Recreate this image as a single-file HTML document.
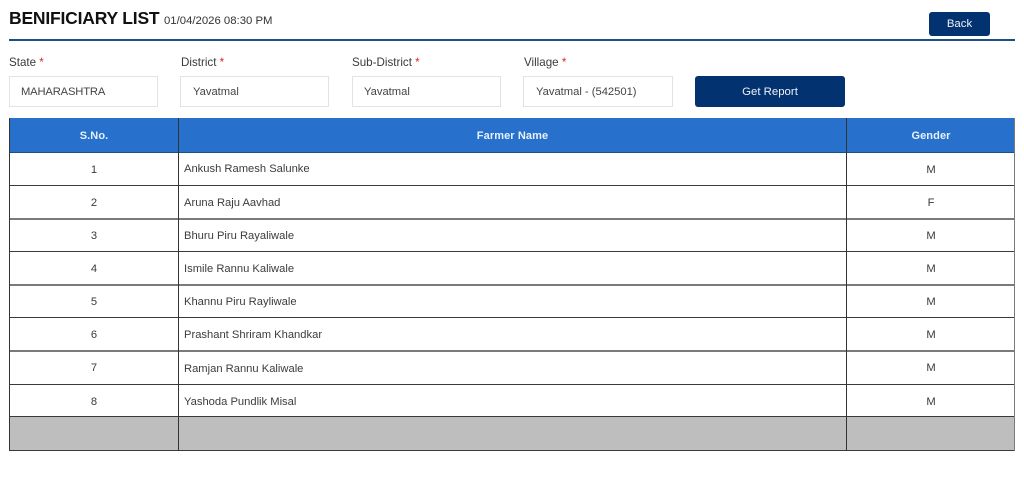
<!DOCTYPE html>
<html>
<head>
<meta charset="utf-8">
<style>
html,body{margin:0;padding:0;background:#fff;}
body{width:1024px;height:486px;position:relative;overflow:hidden;font-family:"Liberation Sans",sans-serif;color:#333;}
.a{position:absolute;white-space:nowrap;}
.lab{top:56px;font-size:11.6px;line-height:14px;color:#3a3a3a;}
.lab i{font-style:normal;color:#d9262c;}
.inp{top:76px;height:29px;width:147px;border:1px solid #e3e3e3;background:#fff;font-size:11.2px;line-height:31px;color:#444;box-sizing:content-box;}
.btn{background:#033270;color:#eef2f8;text-align:center;border-radius:3px;font-size:11.4px;}
.h{background:#3a3a3a;height:1px;left:10px;width:1005px;}
.g{background:#7a7a7a;height:2px;}
.v{background:#333;width:1px;top:118px;height:333px;}
.c{font-size:11.2px;line-height:14px;color:#3a3a3a;text-align:center;}
.n{left:184px;font-size:11.2px;line-height:14px;color:#3c3c3c;}
.th{top:129px;font-size:11px;line-height:14px;font-weight:bold;color:#e8f1fb;text-align:center;letter-spacing:.1px;}
</style>
</head>
<body>
<div class="a" style="left:9px;top:8px;font-size:17.5px;line-height:21px;font-weight:bold;color:#111;letter-spacing:-.2px;">BENIFICIARY LIST</div>
<div class="a" style="left:164px;top:14px;font-size:11.35px;line-height:14px;color:#333;">01/04/2026 08:30 PM</div>
<div class="a btn" style="left:929px;top:12px;width:61px;height:24px;line-height:25px;">Back</div>
<div class="a" style="left:9px;top:39px;width:1006px;height:1.5px;background:#1d4f86;"></div>

<div class="a lab" style="left:9px;">State <i>*</i></div>
<div class="a lab" style="left:181px;">District <i>*</i></div>
<div class="a lab" style="left:352px;">Sub-District <i>*</i></div>
<div class="a lab" style="left:524px;">Village <i>*</i></div>

<div class="a inp" style="left:9px;text-indent:11px;letter-spacing:-.15px;">MAHARASHTRA</div>
<div class="a inp" style="left:180px;text-indent:12px;">Yavatmal</div>
<div class="a inp" style="left:352px;text-indent:11px;">Yavatmal</div>
<div class="a inp" style="left:523px;width:148px;text-indent:12px;">Yavatmal - (542501)</div>
<div class="a btn" style="left:695px;top:76px;width:150px;height:31px;line-height:32px;">Get Report</div>

<div class="a" style="left:10px;top:118px;width:1005px;height:34px;background:#2771cc;"></div>
<div class="a" style="left:10px;top:417px;width:1005px;height:33px;background:#bebebe;"></div>

<div class="a h" style="top:152px;background:#1d4f86;"></div>
<div class="a h" style="top:185px;"></div>
<div class="a h g" style="top:218px;"></div>
<div class="a h" style="top:251px;"></div>
<div class="a h g" style="top:284px;"></div>
<div class="a h" style="top:317px;"></div>
<div class="a h g" style="top:350px;"></div>
<div class="a h" style="top:384px;"></div>
<div class="a h" style="top:416px;"></div>
<div class="a h" style="top:450px;"></div>

<div class="a v" style="left:9px;"></div>
<div class="a v" style="left:178px;"></div>
<div class="a v" style="left:846px;"></div>
<div class="a v" style="left:1014px;background:#7a7a7a;"></div>

<div class="a th" style="left:10px;width:168px;">S.No.</div>
<div class="a th" style="left:179px;width:667px;">Farmer Name</div>
<div class="a th" style="left:847px;width:168px;">Gender</div>

<div class="a c" style="left:10px;width:168px;top:163px;">1</div>
<div class="a n" style="top:162px;">Ankush Ramesh Salunke</div>
<div class="a c" style="left:847px;width:168px;top:163px;">M</div>

<div class="a c" style="left:10px;width:168px;top:196px;">2</div>
<div class="a n" style="top:196px;">Aruna Raju Aavhad</div>
<div class="a c" style="left:847px;width:168px;top:196px;">F</div>

<div class="a c" style="left:10px;width:168px;top:229px;">3</div>
<div class="a n" style="top:229px;">Bhuru Piru Rayaliwale</div>
<div class="a c" style="left:847px;width:168px;top:229px;">M</div>

<div class="a c" style="left:10px;width:168px;top:262px;">4</div>
<div class="a n" style="top:262px;">Ismile Rannu Kaliwale</div>
<div class="a c" style="left:847px;width:168px;top:262px;">M</div>

<div class="a c" style="left:10px;width:168px;top:295px;">5</div>
<div class="a n" style="top:295px;">Khannu Piru Rayliwale</div>
<div class="a c" style="left:847px;width:168px;top:295px;">M</div>

<div class="a c" style="left:10px;width:168px;top:328px;">6</div>
<div class="a n" style="top:328px;">Prashant Shriram Khandkar</div>
<div class="a c" style="left:847px;width:168px;top:328px;">M</div>

<div class="a c" style="left:10px;width:168px;top:361px;">7</div>
<div class="a n" style="top:362px;">Ramjan Rannu Kaliwale</div>
<div class="a c" style="left:847px;width:168px;top:361px;">M</div>

<div class="a c" style="left:10px;width:168px;top:395px;">8</div>
<div class="a n" style="top:395px;">Yashoda Pundlik Misal</div>
<div class="a c" style="left:847px;width:168px;top:395px;">M</div>
</body>
</html>
